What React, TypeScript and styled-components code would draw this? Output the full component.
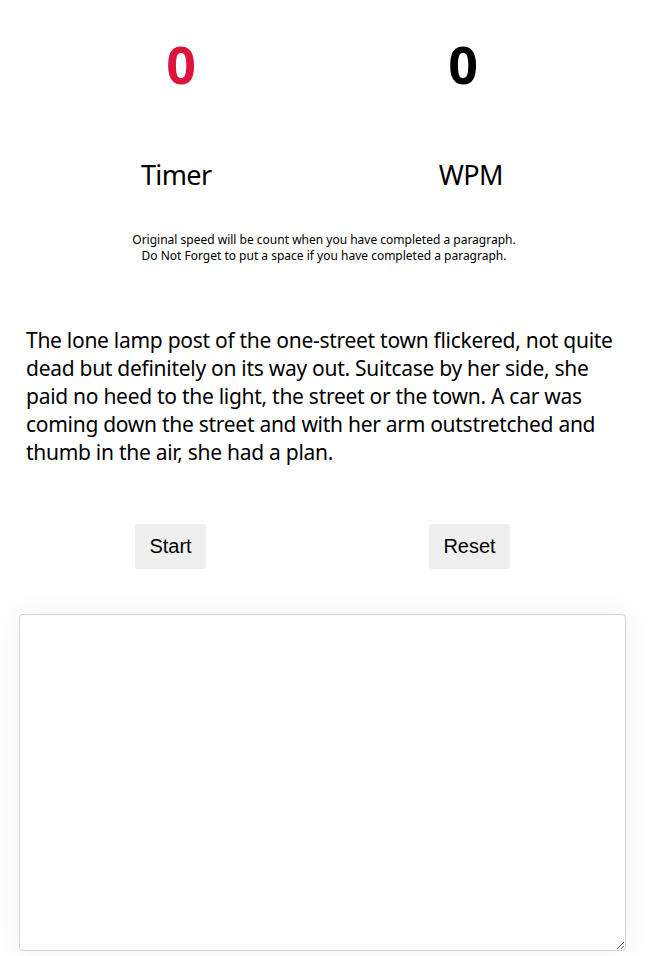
import React from "react";
import styled, { createGlobalStyle } from "styled-components";

const Global = createGlobalStyle`
  html, body { margin: 0; padding: 0; background: #ffffff; }
  body { font-family: "Noto Sans", "Open Sans", sans-serif; color: #000; }
`;

const Page = styled.main`
  display: flex;
  flex-direction: column;
  padding-top: 34px;
  padding-bottom: 6px;
`;

const Row = styled.div<{ $pl: number; $pr: number; $mt?: number }>`
  display: grid;
  grid-template-columns: 1fr 1fr;
  justify-items: center;
  padding: 0 ${(p) => p.$pr}px 0 ${(p) => p.$pl}px;
  margin-top: ${(p) => p.$mt ?? 0}px;
`;

const Count = styled.div<{ $red?: boolean }>`
  font-size: 52px;
  line-height: 60px;
  font-weight: 700;
  color: ${(p) => (p.$red ? "#dc143c" : "#000")};
`;

const Label = styled.div`
  font-size: 27px;
  line-height: 36px;
  font-weight: 400;
  letter-spacing: -0.6px;
`;

const Note = styled.p`
  margin: 39px 0 0;
  text-align: center;
  font-size: 12px;
  line-height: 16px;
`;

const Passage = styled.p`
  margin: 62px 0 0;
  padding: 0 24px 0 26px;
  font-size: 21px;
  line-height: 28px;
  letter-spacing: -0.28px;
`;

const Button = styled.button`
  font-family: "Liberation Sans", Arial, sans-serif;
  font-size: 20px;
  line-height: 23px;
  padding: 11px 14px;
  border: none;
  border-radius: 3px;
  background: #efefef;
  color: #000;
  cursor: pointer;
`;

const Input = styled.textarea`
  display: block;
  box-sizing: border-box;
  margin: 45px 22px 0 19px;
  width: calc(100% - 41px);
  height: 337px;
  border: 1px solid #d3d3d3;
  border-radius: 4px;
  background: #fff;
  box-shadow: 0 0 28px rgba(0, 0, 0, 0.06);
  font-family: "Noto Sans", sans-serif;
  font-size: 16px;
  padding: 8px;
  outline: none;
  resize: both;
`;

export default function App() {
  return (
    <>
      <Global />
      <Page>
        <Row $pl={40} $pr={44}>
          <Count $red>0</Count>
          <Count>0</Count>
        </Row>
        <Row $pl={29} $pr={30} $mt={63}>
          <Label>Timer</Label>
          <Label>WPM</Label>
        </Row>
        <Note>
          Original speed will be count when you have completed a paragraph.
          <br />
          Do Not Forget to put a space if you have completed a paragraph.
        </Note>
        <Passage>
          The lone lamp post of the one-street town flickered, not quite dead
          but definitely on its way out. Suitcase by her side, she paid no heed
          to the light, the street or the town. A car was coming down the street
          and with her arm outstretched and thumb in the air, she had a plan.
        </Passage>
        <Row $pl={21} $pr={29} $mt={58}>
          <Button>Start</Button>
          <Button>Reset</Button>
        </Row>
        <Input />
      </Page>
    </>
  );
}
